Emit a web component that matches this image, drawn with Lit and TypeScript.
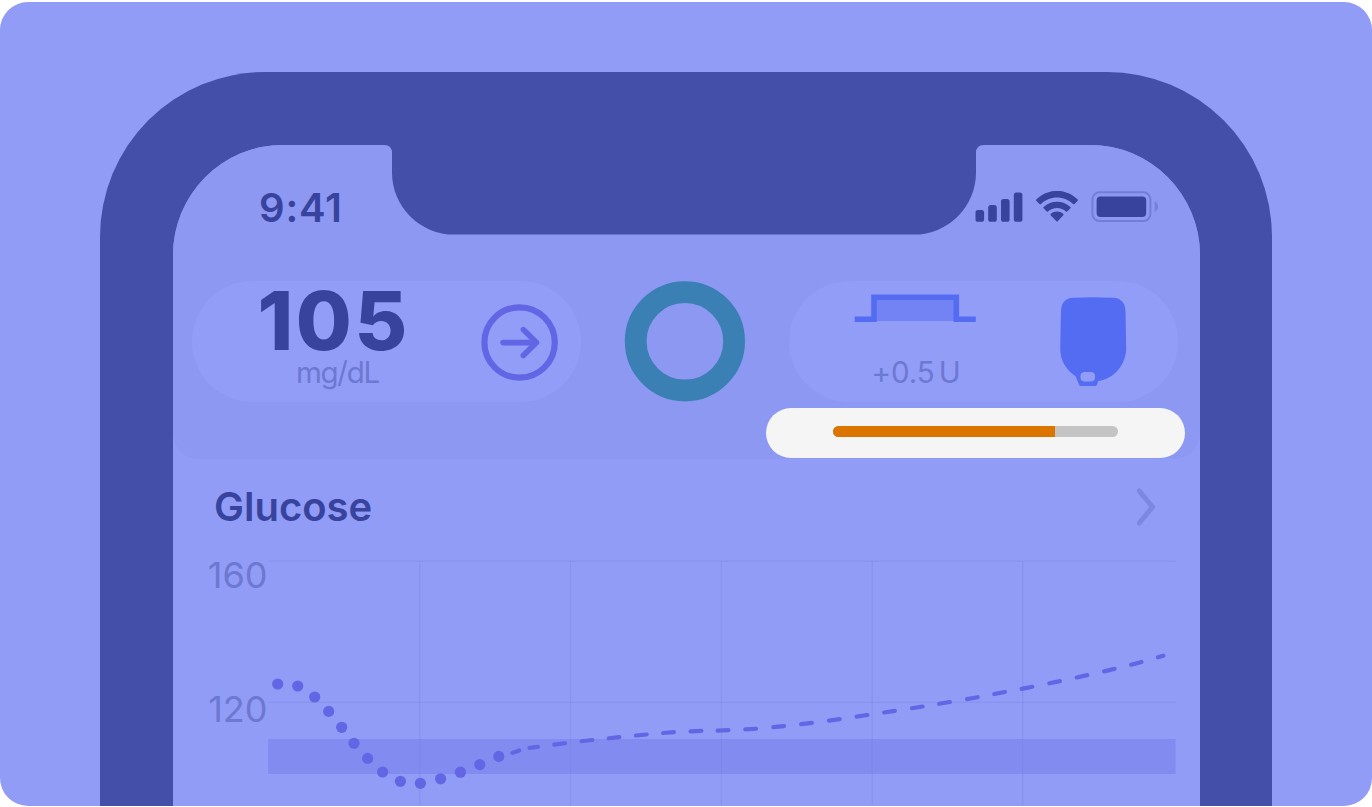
import { LitElement, html, svg, css } from "lit";
import { customElement } from "lit/decorators.js";

type Point = [number, number];

const READINGS: Point[] = [
  [277.7, 684], [297.7, 686], [314.7, 697], [328.7, 711.4], [341.7, 727.3],
  [354, 743.3], [367.6, 758.4], [382.6, 772], [400.4, 781.3], [420.4, 783.3],
  [440.6, 778.8], [460.4, 772.2], [479.8, 764.6], [498.8, 756.4],
];

const FORECAST: Point[] = [
  [515.8, 751.7], [533.7, 747.3], [559.6, 743.9], [587, 740.6], [614, 737.7],
  [641.3, 735], [668.5, 732.6], [696, 731.1], [723, 730.4], [750.7, 729.1],
  [778.7, 726.6], [806.5, 723.5], [834.3, 719.9], [862, 715.8], [889.5, 711.7],
  [917.2, 707.4], [944.5, 702.9], [972.3, 698.2], [999.6, 693], [1027, 687.8],
  [1054.6, 682.2], [1082, 676.3], [1109.3, 670.1], [1136.3, 663.3], [1160.6, 656.5],
];

const HOURS = [419.8, 570.5, 721.4, 872.2, 1022.8];
const LEVELS = [561.2, 702.3];

@customElement("status-bar")
class StatusBar extends LitElement {
  static styles = css`
    :host {
      display: grid;
      grid-template-columns: 211.5px 600px 215.5px;
      height: 90px;
      color: #38439d;
    }
    .time {
      padding: 39px 0 0 86.5px;
      font: 600 40px/48px Inter, sans-serif;
      letter-spacing: 0.8px;
      white-space: nowrap;
    }
    .notch { display: block; margin-top: -1px; }
    .icons {
      display: flex;
      justify-content: flex-end;
      align-items: flex-start;
      padding: 46px 41px 0 0;
    }
    .icons svg { flex: none; display: block; }
    .wifi { margin: 0 13.5px 0 13px; }
  `;
  render() {
    return html`
      <div class="time">9:41</div>
      <svg class="notch" width="600" height="91" viewBox="0 -1 600 91">
        <path fill="#444fa9" d="M0-1V0Q8 0 8 8V28A62 62 0 0 0 70 89.6H530A62 62 0 0 0 592 28V8Q592 0 600 0V-1Z" />
      </svg>
      <div class="icons">
        <svg width="48" height="32" viewBox="0 0.4 48 32" fill="currentColor">
          <rect x="0.5" y="19.5" width="8.6" height="11.7" rx="2.6" />
          <rect x="13.2" y="14.5" width="8.6" height="16.7" rx="2.6" />
          <rect x="26" y="8.4" width="8.6" height="22.8" rx="2.6" />
          <rect x="38.8" y="2" width="8.6" height="29.2" rx="2.6" />
        </svg>
        <svg class="wifi" width="42" height="32" viewBox="0.25 0.05 16.5 12.57" fill="currentColor">
          <path d="M8.5 2.588C10.89 2.588 13.188 3.525 14.919 5.206C15.05 5.336 15.258 5.334 15.386 5.202L16.633 3.918C16.698 3.851 16.734 3.76 16.734 3.666C16.733 3.572 16.696 3.482 16.63 3.415C12.085-1.138 4.914-1.138 0.369 3.415C0.303 3.481 0.266 3.572 0.265 3.666C0.265 3.76 0.301 3.851 0.366 3.918L1.612 5.202C1.741 5.334 1.949 5.336 2.08 5.206C3.811 3.525 6.11 2.588 8.5 2.588ZM8.5 6.767C9.813 6.767 11.079 7.26 12.052 8.151C12.183 8.277 12.391 8.275 12.519 8.145L13.764 6.86C13.83 6.793 13.866 6.701 13.865 6.606C13.864 6.511 13.826 6.421 13.759 6.355C10.796 3.545 6.207 3.545 3.243 6.355C3.176 6.421 3.138 6.511 3.137 6.606C3.136 6.701 3.173 6.793 3.239 6.86L4.483 8.145C4.612 8.275 4.819 8.277 4.951 8.151C5.923 7.261 7.188 6.768 8.5 6.767ZM10.992 9.579C11.058 9.512 11.095 9.42 11.093 9.325C11.092 9.229 11.051 9.139 10.982 9.074C9.549 7.829 7.451 7.829 6.018 9.074C5.949 9.139 5.908 9.229 5.906 9.325C5.905 9.42 5.941 9.512 6.008 9.579L8.266 11.903C8.332 11.971 8.422 12.009 8.516 12.009C8.61 12.009 8.7 11.971 8.766 11.903L10.992 9.579Z" />
        </svg>
        <svg width="67.5" height="32" viewBox="0 0.4 67.5 32">
          <rect x="1.4" y="1.7" width="58" height="28.8" rx="7" fill="none" stroke="#727dd7" stroke-width="2" />
          <rect x="5.6" y="5.8" width="49.6" height="20.6" rx="4" fill="currentColor" />
          <path d="M63.6 10.6Q67 12 67 16T63.6 21.4Z" fill="#7681dc" />
        </svg>
      </div>
    `;
  }
}

@customElement("glucose-chart")
class GlucoseChart extends LitElement {
  static styles = css`
    :host {
      display: grid;
      grid-template-columns: 95.5px 931.5px;
      height: 246px;
    }
    .axis {
      display: flex;
      flex-direction: column;
      gap: 90px;
      margin-top: -7px;
      text-align: right;
      padding-right: 0.5px;
      font: 400 36px/44px Inter, sans-serif;
      color: #6d78d0;
    }
    .plot { display: block; }
  `;
  private dash(i: number) {
    const [x, y] = FORECAST[i];
    const a = FORECAST[Math.max(0, i - 1)];
    const b = FORECAST[Math.min(FORECAST.length - 1, i + 1)];
    const angle =
      i === 0 ? -0.33 : i === 1 ? -0.13 : Math.atan2(b[1] - a[1], b[0] - a[0]);
    const half = i === 0 ? 3.6 : i === 1 ? 4.2 : i === FORECAST.length - 1 ? 2.8 : 5.4;
    const dx = Math.cos(angle) * half;
    const dy = Math.sin(angle) * half;
    return svg`<line x1=${x - dx} y1=${y - dy} x2=${x + dx} y2=${y + dy} />`;
  }
  render() {
    return html`
      <div class="axis"><span>160</span><span>120</span></div>
      <svg class="plot" width="931.5" height="246" viewBox="268 560 931.5 246">
        <rect x="268.2" y="739" width="907.4" height="35" fill="#828bf0" />
        <g stroke="#6f7ad6" stroke-opacity="0.25" stroke-width="1.2">
          ${LEVELS.map((y) => svg`<line x1="268.2" x2="1175.6" y1=${y} y2=${y} />`)}
          ${HOURS.map((x) => svg`<line x1=${x} x2=${x} y1="561" y2="806" />`)}
        </g>
        <g fill="#6266e4">
          ${READINGS.map(([x, y]) => svg`<circle cx=${x} cy=${y} r="5.6" />`)}
        </g>
        <g stroke="#6266e4" stroke-width="4.2" stroke-linecap="round">
          ${FORECAST.map((_, i) => this.dash(i))}
        </g>
      </svg>
    `;
  }
}

@customElement("app-root")
class AppRoot extends LitElement {
  static styles = css`
    :host {
      display: block;
      box-sizing: border-box;
      width: 1372px;
      height: 807px;
      padding: 1.5px 0 0.8px;
      background: #fff;
      font-family: Inter, sans-serif;
      overflow: hidden;
    }
    .card {
      box-sizing: border-box;
      height: 100%;
      border-radius: 28px;
      background: #919cf7;
      overflow: hidden;
      padding: 70px 100px 0;
    }
    .phone {
      box-sizing: border-box;
      height: 735px;
      border-radius: 165px 165px 0 0;
      background: #444fa9;
      padding: 73px 72.5px 0;
    }
    .screen {
      height: 662px;
      border-radius: 110px 110px 0 0;
      background: #919cf7;
    }
    .header {
      box-sizing: border-box;
      height: 314.5px;
      border-radius: 110px 110px 26px 26px;
      background: #8d98f2;
    }
    .row {
      display: flex;
      gap: 43.5px;
      padding: 46px 0 0 19px;
    }
    .pill {
      box-sizing: border-box;
      width: 389px;
      height: 121px;
      border-radius: 60.5px;
      background: #929df7;
      display: flex;
      align-items: flex-start;
      flex: none;
    }
    .pill svg, .ring, .more { display: block; flex: none; }
    .reading { width: 289px; }
    .value {
      padding: 3px 0 0 66px;
      font-weight: 800;
      font-size: 81px;
      line-height: 74px;
      letter-spacing: 2.6px;
      color: #38439d;
    }
    .unit {
      font-size: 29.5px;
      line-height: 30px;
      font-weight: 400;
      letter-spacing: -1.3px;
      color: #6d78d0;
      white-space: nowrap;
    }
    .mgdl { padding-left: 104.5px; margin-top: -1px; }
    .trend { margin-top: 23px; }
    .insulin { width: 206px; padding-left: 65px; }
    .basal { margin-top: 13.5px; }
    .dose { padding-left: 18px; margin-top: 34px; letter-spacing: -0.1px; word-spacing: -4px; }
    .pod { margin-top: 15.5px; }
    .highlight {
      box-sizing: border-box;
      width: 419px;
      height: 50px;
      margin: 6.8px 0 0 593.5px;
      border-radius: 25px;
      background: #f5f5f5;
      padding: 18px 67px 0;
    }
    .track {
      height: 11px;
      border-radius: 5.5px;
      background: #c4c4c4;
      overflow: hidden;
    }
    .fill { height: 100%; background: #db7500; }
    .title {
      display: flex;
      justify-content: space-between;
      align-items: center;
      height: 48px;
      padding: 24px 44px 29px 41.5px;
      color: #38439d;
      font-weight: 600;
      font-size: 40px;
      line-height: 48px;
    }
  `;
  render() {
    return html`
      <div class="card">
        <div class="phone">
          <div class="screen">
            <div class="header">
              <status-bar></status-bar>
              <div class="row">
                <div class="pill">
                  <div class="reading">
                    <div class="value">105</div>
                    <div class="unit mgdl">mg/dL</div>
                  </div>
                  <svg class="trend" width="77" height="77" viewBox="480.7 303.7 77 77" fill="none" stroke="#6266e4" stroke-linecap="round" stroke-linejoin="round">
                    <circle cx="519.3" cy="342.2" r="35.2" stroke-width="6.2" />
                    <path stroke-width="5.6" d="M502.8 342.3H536M523 329.3L536.2 342.3L523 355.3" />
                  </svg>
                </div>
                <svg class="ring" width="121" height="121" viewBox="0 0 121 121">
                  <circle cx="60.9" cy="60.3" r="49.2" fill="none" stroke="#3a80b4" stroke-width="21.8" />
                </svg>
                <div class="pill">
                  <div class="insulin">
                    <svg class="basal" width="123" height="29" viewBox="854 294 123 29">
                      <rect x="874" y="297" width="82.3" height="24" fill="#7483f4" />
                      <path d="M854.7 319.3H874V297.3H956.3V319.3H975.8" fill="none" stroke="#546cf2" stroke-width="5.6" />
                    </svg>
                    <div class="unit dose">+0.5 U</div>
                  </div>
                  <svg class="pod" width="67" height="91" viewBox="1060 296 67 91">
                    <path fill="#546cf2" fill-rule="evenodd" d="M1061 311Q1061.5 298.5 1073 297.8Q1093 296.6 1113 297.8Q1125 298.5 1125.5 311L1126.2 348C1126.2 364 1115 378.5 1098.3 381L1097 384.5Q1096.4 386 1095 386H1081Q1079.6 386 1079 384.5L1075.8 376.5C1066 369.5 1060.2 361 1060.2 348ZM1085 372H1090.5Q1095 372 1095 376V377.5Q1095 381.5 1090.5 381.5H1085Q1080.5 381.5 1080.5 377.5V376Q1080.5 372 1085 372Z" />
                  </svg>
                </div>
              </div>
              <div class="highlight">
                <div class="track"><div class="fill" style="width:${(222 / 285) * 100}%"></div></div>
              </div>
            </div>
            <div class="title">
              <span>Glucose</span>
              <svg class="more" width="20" height="40" viewBox="1136 487 20 40" fill="none" stroke="#7c87e2" stroke-width="5" stroke-linecap="round" stroke-linejoin="round">
                <path d="M1139.3 491L1152.5 507L1139.3 523" />
              </svg>
            </div>
            <glucose-chart></glucose-chart>
          </div>
        </div>
      </div>
    `;
  }
}
